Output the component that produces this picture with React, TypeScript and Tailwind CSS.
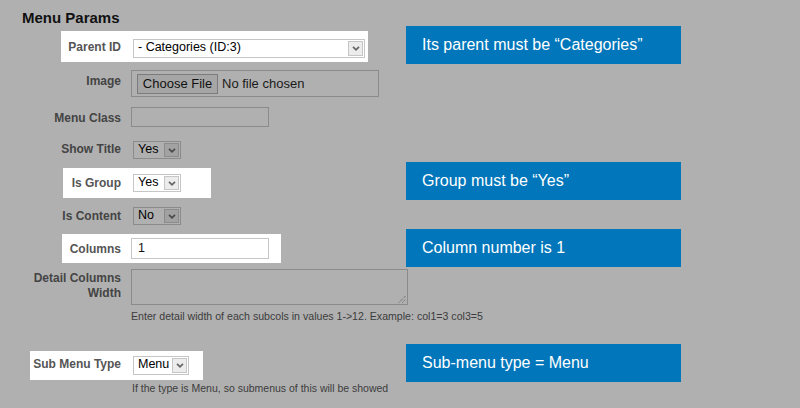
import React from 'react';
import { clsx, type ClassValue } from 'clsx';
import { twMerge } from 'tailwind-merge';

function cn(...inputs: ClassValue[]) {
  return twMerge(clsx(inputs));
}

const Chevron = ({ color }: { color: string }) => (
  <svg width="8" height="5" viewBox="0 0 8 5" fill="none">
    <polyline points="1,0.8 4,3.8 7,0.8" stroke={color} strokeWidth="1.7" />
  </svg>
);

interface SelectProps {
  value: string;
  size: string;
  hl?: boolean;
}

const Select: React.FC<SelectProps> = ({ value, size, hl }) => (
  <div
    className={cn(
      'flex border',
      size,
      hl ? 'border-[#c6c6c6] bg-white' : 'border-[#8b8b8b] bg-[#b0b0b0]'
    )}
  >
    <span className="flex-1 pl-[4px] text-[12.5px] leading-[15px] text-black whitespace-nowrap">{value}</span>
    <span
      className={cn(
        'm-[1px] flex w-[15px] items-center justify-center border',
        hl ? 'border-[#c6c6c6] bg-[#ececec]' : 'border-[#8b8b8b] bg-[#a2a2a2]'
      )}
    >
      <Chevron color={hl ? '#666' : '#4a4a4a'} />
    </span>
  </div>
);

const Label = ({ children, className }: { children: React.ReactNode; className?: string }) => (
  <div className={cn('shrink-0 text-right text-[12px] font-bold leading-[18px] text-[#444]', className)}>
    {children}
  </div>
);

const Note = ({ text, className }: { text: string; className?: string }) => (
  <div
    className={cn(
      'absolute left-[406px] flex h-[38px] w-[275px] items-center bg-[#0176ba] pl-[16px] text-[16px] text-white',
      className
    )}
  >
    {text}
  </div>
);

export default function App() {
  return (
    <div className="relative h-[408px] w-[800px] overflow-hidden bg-[#b0b0b0] font-['Liberation_Sans',Arial,sans-serif]">
      <div className="flex flex-col">
        {/* Header */}
        <h3 className="pl-[22px] pt-[9px] text-[15px] font-bold leading-[18px] text-[#111]">Menu Params</h3>

        {/* Parent ID */}
        <div className="ml-[61px] mt-[4px] flex h-[31px] w-[307px] items-start bg-white pt-[8px]">
          <Label className="-mt-[1px] w-[60px] text-[#555]">Parent ID</Label>
          <div className="ml-[12px]">
            <Select value="- Categories (ID:3)" size="h-[19px] w-[232px]" hl />
          </div>
        </div>

        {/* Image */}
        <div className="mt-[8px] flex items-start">
          <Label className="mt-[2px] w-[121px]">Image</Label>
          <div className="ml-[10px] flex h-[27px] w-[248px] items-center border border-[#8b8b8b] pl-[5px]">
            <div className="flex h-[20px] w-[81px] items-center justify-center border border-[#7b7b7b] bg-[#a6a6a6] text-[13px] text-[#111]">
              Choose File
            </div>
            <span className="ml-[4px] text-[13px] text-[#1a1a1a]">No file chosen</span>
          </div>
        </div>

        {/* Menu Class */}
        <div className="mt-[10px] flex items-start">
          <Label className="mt-[2px] w-[121px]">Menu Class</Label>
          <div className="ml-[10px] h-[20px] w-[138px] border border-[#8b8b8b]" />
        </div>

        {/* Show Title */}
        <div className="mt-[13px] flex items-start">
          <Label className="w-[121px]">Show Title</Label>
          <div className="ml-[12px] mt-[1px]">
            <Select value="Yes" size="h-[18px] w-[48px]" />
          </div>
        </div>

        {/* Is Group */}
        <div className="ml-[63px] mt-[9px] flex h-[30px] w-[148px] items-start bg-white pt-[6px]">
          <Label className="w-[58px] text-[#555]">Is Group</Label>
          <div className="ml-[12px]">
            <Select value="Yes" size="h-[18px] w-[48px]" hl />
          </div>
        </div>

        {/* Is Content */}
        <div className="mt-[9px] flex items-start">
          <Label className="w-[121px]">Is Content</Label>
          <div className="ml-[12px]">
            <Select value="No" size="h-[18px] w-[48px]" />
          </div>
        </div>

        {/* Columns */}
        <div className="ml-[62px] mt-[9px] flex h-[29px] w-[219px] items-start bg-white pt-[4px]">
          <Label className="mt-[2px] w-[59px] text-[#555]">Columns</Label>
          <div className="ml-[10px] flex h-[21px] w-[138px] items-center border border-[#c6c6c6] pl-[6px] text-[12.5px] text-[#111]">
            1
          </div>
        </div>

        {/* Detail Columns Width */}
        <div className="mt-[6px] flex items-start">
          <Label className="mt-[2px] w-[121px] leading-[15px]">
            Detail Columns
            <br />
            Width
          </Label>
          <div className="ml-[10px] flex flex-col">
            <div className="relative h-[36px] w-[277px] border border-[#8b8b8b]">
              <svg className="absolute bottom-[1px] right-[1px]" width="8" height="8" viewBox="0 0 8 8">
                <line x1="1" y1="7.5" x2="7.5" y2="1" stroke="#555" strokeWidth="1" strokeDasharray="1 1" />
                <line x1="4.5" y1="7.5" x2="7.5" y2="4.5" stroke="#555" strokeWidth="1" strokeDasharray="1 1" />
              </svg>
            </div>
            <p className="mt-[5px] text-[10.6px] leading-[12px] text-[#3c3c3c] whitespace-nowrap">
              Enter detail width of each subcols in values 1-&gt;12. Example: col1=3 col3=5
            </p>
          </div>
        </div>

        {/* Sub Menu Type */}
        <div className="ml-[30px] mt-[29px] flex h-[29px] w-[173px] items-start bg-white pt-[4px]">
          <Label className="w-[91px] text-[#555]">Sub Menu Type</Label>
          <div className="ml-[12px] mt-[1px]">
            <Select value="Menu" size="h-[19px] w-[56px]" hl />
          </div>
        </div>
        <p className="ml-[132px] mt-[2px] text-[10.5px] leading-[12px] text-[#3c3c3c]">
          If the type is Menu, so submenus of this will be showed
        </p>
      </div>

      {/* Annotations */}
      <Note className="top-[26px]" text="Its parent must be “Categories”" />
      <Note className="top-[162px]" text="Group must be “Yes”" />
      <Note className="top-[229px]" text="Column number is 1" />
      <Note className="top-[344px]" text="Sub-menu type = Menu" />
    </div>
  );
}
